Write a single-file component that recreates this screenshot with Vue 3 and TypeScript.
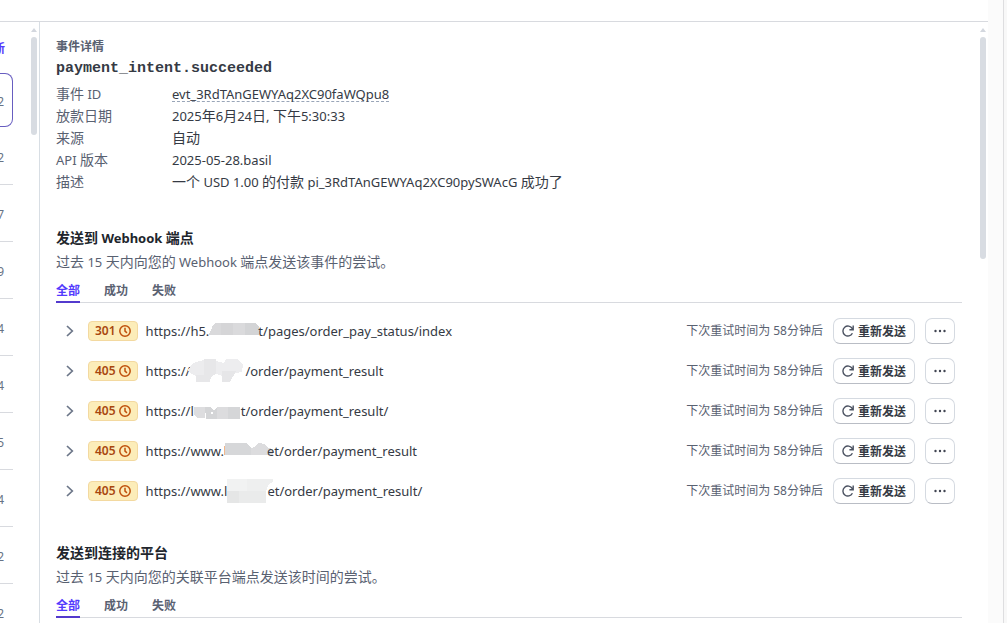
<script setup lang="ts">
import { h, ref, type FunctionalComponent } from 'vue'

interface Block {
  points: string
  fill: string
}

interface Attempt {
  status: number
  prefix: string
  suffix: string
  maskWidth: number
  mask: Block[]
}

const MixedText: FunctionalComponent<{ text: string }> = (props) =>
  h(
    'span',
    { class: 'mixed' },
    props.text
      .split(/([\u3000-\u9fff]+)/)
      .filter(Boolean)
      .map((part) => h('span', { class: /[\u3000-\u9fff]/.test(part) ? 'han' : 'latin' }, part)),
  )
MixedText.props = ['text']

const entries = ['2', '2', '7', '9', '4', '4', '5', '4', '2', '2']

const details = [
  { label: '事件 ID', value: 'evt_3RdTAnGEWYAq2XC90faWQpu8', copy: true },
  { label: '放款日期', value: '2025年6月24日, 下午5:30:33', copy: false },
  { label: '来源', value: '自动', copy: false },
  { label: 'API 版本', value: '2025-05-28.basil', copy: false },
  { label: '描述', value: '一个 USD 1.00 的付款 pi_3RdTAnGEWYAq2XC90pySWAcG 成功了', copy: false },
]

const attempts: Attempt[] = [
  {
    status: 301,
    prefix: 'https://h5.',
    suffix: 't/pages/order_pay_status/index',
    maskWidth: 49,
    mask: [
      { points: '0,15 2,11 4,6 7,4 12,4 12,16 0,16', fill: '#d9d9db' },
      { points: '12,4 24,4 24,16 12,16', fill: '#d5d5d7' },
      { points: '24,4 36,4 36,16 24,16', fill: '#dadadc' },
      { points: '36,4 46,4 50,8 51,15 48,16 36,16', fill: '#d3d4d6' },
    ],
  },
  {
    status: 405,
    prefix: 'https://',
    suffix: '/order/payment_result',
    maskWidth: 55,
    mask: [
      { points: '-2,11 3,4 14,1 14,17 6,17 0,14', fill: '#ececee' },
      { points: '14,0 26,0 26,15 21,18 20,23 6,23 6,16 14,16', fill: '#e7e7e9' },
      { points: '26,2 34,4 36,0 48,0 53,6 52,13 40,15 40,23 32,23 32,17 26,15', fill: '#ededef' },
      { points: '32,12 46,12 40,23 32,23', fill: '#e6e6e8' },
    ],
  },
  {
    status: 405,
    prefix: 'https://l',
    suffix: 't/order/payment_result/',
    maskWidth: 47,
    mask: [
      { points: '0,8 11,8 11,19 4,19 0,16', fill: '#dddddf' },
      { points: '11,8 16,8 20,11 23,9 23,20 12,20', fill: '#d4d5d7' },
      { points: '23,8 34,8 34,20 23,20', fill: '#dcdcde' },
      { points: '34,8 46,8 46,20 34,20', fill: '#d5d6d8' },
      { points: '17,13 19,13 19,15 17,15', fill: '#ffffff' },
    ],
  },
  {
    status: 405,
    prefix: 'https://www.',
    suffix: 'et/order/payment_result',
    maskWidth: 43,
    mask: [
      { points: '0,7 1,7 1,16 0,16', fill: '#f3b78b' },
      { points: '1,4 23,4 27,9 27,16 1,16', fill: '#d6d7d9' },
      { points: '27,9 30,8 35,4 40,5 44,9 49,10 49,16 27,16', fill: '#dcdcde' },
    ],
  },
  {
    status: 405,
    prefix: 'https://www.l',
    suffix: 'et/order/payment_result/',
    maskWidth: 40,
    mask: [
      { points: '0,0 20,0 20,12 0,12', fill: '#f1f2f2' },
      { points: '20,0 46,0 46,3 42,5 39,12 20,12', fill: '#eeefef' },
      { points: '0,12 12,12 12,24 0,24', fill: '#e5e6e6' },
      { points: '12,12 39,12 39,24 12,24', fill: '#eaebeb' },
    ],
  },
]

const tabs = ['全部', '成功', '失败']
const endpointTab = ref(0)
const platformTab = ref(0)
</script>

<template>
  <div class="page">
    <div class="frame">
      <div class="topbar"></div>
      <div class="panes">
        <aside class="sidebar">
          <div class="list">
            <div class="refresh"><a href="#">新</a></div>
            <div v-for="(entry, i) in entries" :key="i" class="entry" :class="{ selected: i === 0 }">
              {{ entry }}
            </div>
          </div>
          <div class="track">
            <svg class="arrow" width="6" height="4" viewBox="0 0 6 4"><path d="M3 0 6 4H0Z" fill="#d3d7de" /></svg>
            <div class="thumb short"></div>
          </div>
        </aside>

        <main class="detail">
          <header>
            <p class="eyebrow">事件详情</p>
            <h1>payment_intent.succeeded</h1>
          </header>
          <dl>
            <div v-for="d in details" :key="d.label" class="pair">
              <dt><MixedText :text="d.label" /></dt>
              <dd><MixedText :text="d.value" :class="{ copyable: d.copy }" /></dd>
            </div>
          </dl>

          <section>
            <h2><MixedText text="发送到 Webhook 端点" /></h2>
            <p class="note"><MixedText text="过去 15 天内向您的 Webhook 端点发送该事件的尝试。" /></p>
            <nav class="tabs">
              <button v-for="(t, i) in tabs" :key="t" type="button" :class="{ active: i === endpointTab }" @click="endpointTab = i">{{ t }}</button>
            </nav>
            <ul class="attempts">
              <li v-for="(a, i) in attempts" :key="i">
                <button type="button" class="expand" aria-label="展开">
                  <svg width="8" height="12" viewBox="0 0 8 12" fill="none" stroke="#6c7688" stroke-width="1.700"><path d="M1 1l5.300 5L1 11" /></svg>
                </button>
                <span class="badge">
                  {{ a.status }}
                  <svg width="12" height="12" viewBox="0 0 12 12" fill="none" stroke="#c0500c" stroke-width="1.500"><circle cx="6" cy="6" r="5.200" /><path d="M6 2.800V6.200L8 7.800" /></svg>
                </span>
                <span class="url">
                  <span>{{ a.prefix }}</span>
                  <svg class="mask" :width="a.maskWidth" height="24" shape-rendering="crispEdges">
                    <polygon v-for="(b, j) in a.mask" :key="j" :points="b.points" :fill="b.fill" />
                  </svg>
                  <span>{{ a.suffix }}</span>
                </span>
                <span class="retry">下次重试时间为 58分钟后</span>
                <button type="button" class="btn resend">
                  <svg width="12" height="12" viewBox="0 0 12 12" fill="none" stroke="#4b5261" stroke-width="1.400"><path d="M10.400 8.300A5 5 0 1 1 10.300 3.600L11 4.600M11.200 .5V4.700H7.400" /></svg>
                  重新发送
                </button>
                <button type="button" class="btn more" aria-label="更多">
                  <svg width="12" height="4" viewBox="0 0 12 4" fill="#414552"><circle cx="1.500" cy="2" r="1.200" /><circle cx="6" cy="2" r="1.200" /><circle cx="10.500" cy="2" r="1.200" /></svg>
                </button>
              </li>
            </ul>
          </section>

          <section>
            <h2>发送到连接的平台</h2>
            <p class="note"><MixedText text="过去 15 天内向您的关联平台端点发送该时间的尝试。" /></p>
            <nav class="tabs">
              <button v-for="(t, i) in tabs" :key="t" type="button" :class="{ active: i === platformTab }" @click="platformTab = i">{{ t }}</button>
            </nav>
          </section>
        </main>

        <div class="track">
          <svg class="arrow" width="6" height="4" viewBox="0 0 6 4"><path d="M3 0 6 4H0Z" fill="#d3d7de" /></svg>
          <div class="thumb long"></div>
        </div>
      </div>
    </div>
    <div class="gutter"></div>
    <div class="edge"></div>
  </div>
</template>

<style>
body {
  margin: 0;
  background: #fff;
}
.mixed {
  display: inline-block;
  white-space: pre;
}
.mixed .latin {
  font-size: 13px;
}
</style>

<style scoped>
.page {
  display: flex;
  height: 100vh;
  overflow: hidden;
  color: #353a44;
  font: 14px/22px 'Noto Sans', 'Noto Sans CJK SC', sans-serif;
}
.page *,
.page {
  box-sizing: border-box;
}
.page button {
  padding: 0;
  border: 0;
  background: none;
  font-family: inherit;
  cursor: pointer;
}
h1, h2, p, dl, dd, ul {
  margin: 0;
  padding: 0;
}
svg {
  display: block;
  flex: none;
}
.frame {
  flex: 1;
  min-width: 0;
  display: flex;
  flex-direction: column;
}
.gutter {
  width: 15px;
  background: #fbfbfb;
}
.edge {
  width: 4px;
  border-left: 1px solid #dedee0;
  background: #f8f8f8;
}
.topbar {
  height: 22px;
  flex: none;
  border-bottom: 1px solid #d8dadf;
}
.panes {
  flex: 1;
  min-height: 0;
  display: flex;
}
.sidebar {
  width: 40px;
  flex: none;
  display: flex;
  justify-content: space-between;
  border-right: 1px solid #d8dee4;
}
.list {
  width: 13px;
}
.refresh {
  height: 51px;
  padding: 16px 8px 0 0;
  display: flex;
  justify-content: flex-end;
  font-size: 12px;
  line-height: 22px;
  font-weight: 700;
}
.refresh a {
  flex: none;
  color: #533afd;
  text-decoration: none;
}
.entry {
  height: 57px;
  padding: 3px 9px 0 0;
  display: flex;
  align-items: center;
  justify-content: flex-end;
  border-bottom: 1px solid #d8dadf;
  color: #687385;
  font-size: 12px;
}
.entry.selected {
  height: 54px;
  margin-bottom: 1px;
  padding-right: 8px;
  border: 1px solid #675dc0;
  border-left: 0;
  border-radius: 0 8px 8px 0;
}
.track {
  width: 8px;
  flex: none;
  padding-top: 6px;
}
.arrow {
  margin-bottom: 5px;
}
.thumb {
  width: 6px;
  border-radius: 3px;
  background: #d8dce2;
}
.short {
  height: 98px;
}
.long {
  height: 222px;
}
.detail {
  flex: 1;
  min-width: 0;
  padding: 15px 18px 0 16px;
  overflow: hidden;
}
.eyebrow {
  color: #596171;
  font-size: 12px;
  line-height: 20px;
  font-weight: 700;
}
h1 {
  margin-bottom: 2px;
  color: #353a44;
  font: 700 15px/24px 'Liberation Mono', monospace;
}
.pair {
  display: flex;
}
dt {
  width: 116px;
  color: #596171;
}
.copyable {
  height: 19px;
  line-height: 22px;
  border-bottom: 1px dashed #99a5b8;
}
section {
  margin-top: 33px;
}
section + section {
  margin-top: 30px;
}
h2 {
  color: #21252c;
  font-size: 14px;
  line-height: 24px;
  font-weight: 700;
}
.note {
  color: #596171;
  line-height: 24px;
}
.tabs {
  display: flex;
  gap: 24px;
  height: 29px;
  border-bottom: 1px solid #d8dadf;
}
.page .tabs button {
  height: 29px;
  padding-top: 6px;
  border-bottom: 2px solid transparent;
  color: #596171;
  font-size: 12px;
  line-height: 20px;
  font-weight: 700;
}
.page .tabs .active {
  border-color: #533acd;
  color: #533afd;
}
.attempts {
  padding: 8px 7px 0 8px;
  list-style: none;
}
li {
  display: flex;
  align-items: center;
  height: 40px;
}
.page .expand {
  width: 24px;
  height: 24px;
  padding-left: 2px;
}
.badge {
  display: flex;
  align-items: center;
  gap: 3px;
  height: 20px;
  padding: 0 6px;
  border: 1px solid #f3d9a0;
  border-radius: 4px;
  background: #fcedb9;
  color: #a8470f;
  font-size: 12px;
  font-weight: 600;
}
.url {
  display: flex;
  align-items: center;
  margin-left: 8px;
  font-size: 13px;
  white-space: nowrap;
}
.mask {
  overflow: visible;
}
.retry {
  margin-left: auto;
  color: #596171;
  font-size: 12px;
}
.page .btn {
  display: flex;
  align-items: center;
  justify-content: center;
  height: 26px;
  border: 1px solid #d5dae1;
  border-bottom-color: #b9bdc5;
  border-radius: 7px;
  background: #fff;
  color: #353a44;
  font-size: 12px;
  font-weight: 700;
}
.page .resend {
  gap: 4px;
  margin: 0 10px;
  padding: 0 8px;
}
.page .more {
  width: 30px;
}
</style>
